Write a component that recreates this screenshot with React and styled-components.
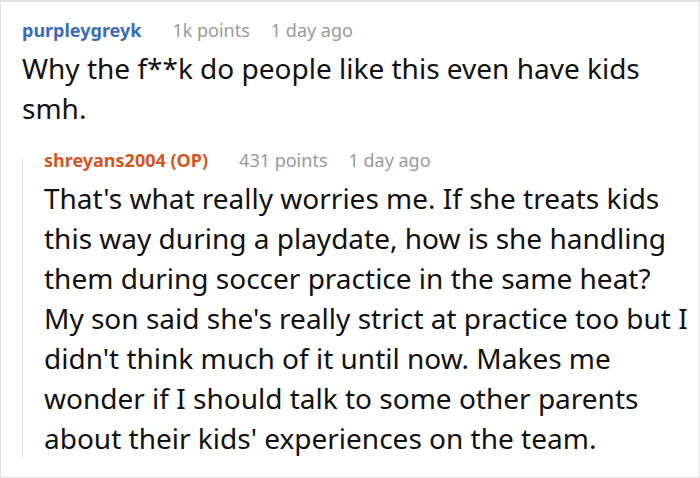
import React from "react";
import styled, { createGlobalStyle } from "styled-components";

const Global = createGlobalStyle`
  html, body { margin: 0; padding: 0; background: #fff; }
  body { font-family: "Noto Sans", "Open Sans", sans-serif; }
`;

const Frame = styled.div`
  width: 700px;
  height: 478px;
  box-sizing: border-box;
  border: 1px solid #e2e2e2;
  border-top-width: 2px;
  padding: 10px 0 0 21px;
  overflow: hidden;
`;

const Comment = styled.div`
  display: flex;
  flex-direction: column;
`;

const Header = styled.div`
  display: flex;
  align-items: baseline;
  height: 36px;
  line-height: 36px;
  font-size: 18px;
  white-space: nowrap;
`;

const Author = styled.span`
  font-weight: 700;
  color: ${(p) => (p.$op ? "#d4561f" : "#3a6cb8")};
  margin-right: 31px;
`;

const Meta = styled.span`
  color: #999;
  margin-right: 21px;
`;

const Body = styled.p`
  margin: 0;
  font-size: 28px;
  line-height: 40px;
  color: #111;
  white-space: nowrap;
`;

const Reply = styled.div`
  margin-top: 14px;
  display: flex;
`;

const Rail = styled.div`
  width: 1px;
  margin-top: 16px;
  margin-bottom: 0;
  background: #e4e4e4;
  flex: none;
`;

const ReplyContent = styled.div`
  display: flex;
  flex-direction: column;
  margin-left: 21px;
`;

export default function App() {
  return (
    <>
      <Global />
      <Frame>
        <Comment>
          <Header>
            <Author>purpleygreyk</Author>
            <Meta>1k points</Meta>
            <Meta>1 day ago</Meta>
          </Header>
          <Body>
            Why the f**k do people like this even have kids
            <br />
            smh.
          </Body>
          <Reply>
            <Rail />
            <ReplyContent>
              <Header>
                <Author $op>shreyans2004 (OP)</Author>
                <Meta>431 points</Meta>
                <Meta>1 day ago</Meta>
              </Header>
              <Body>
                That's what really worries me. If she treats kids
                <br />
                this way during a playdate, how is she handling
                <br />
                them during soccer practice in the same heat?
                <br />
                My son said she's really strict at practice too but I
                <br />
                didn't think much of it until now. Makes me
                <br />
                wonder if I should talk to some other parents
                <br />
                about their kids' experiences on the team.
              </Body>
            </ReplyContent>
          </Reply>
        </Comment>
      </Frame>
    </>
  );
}
